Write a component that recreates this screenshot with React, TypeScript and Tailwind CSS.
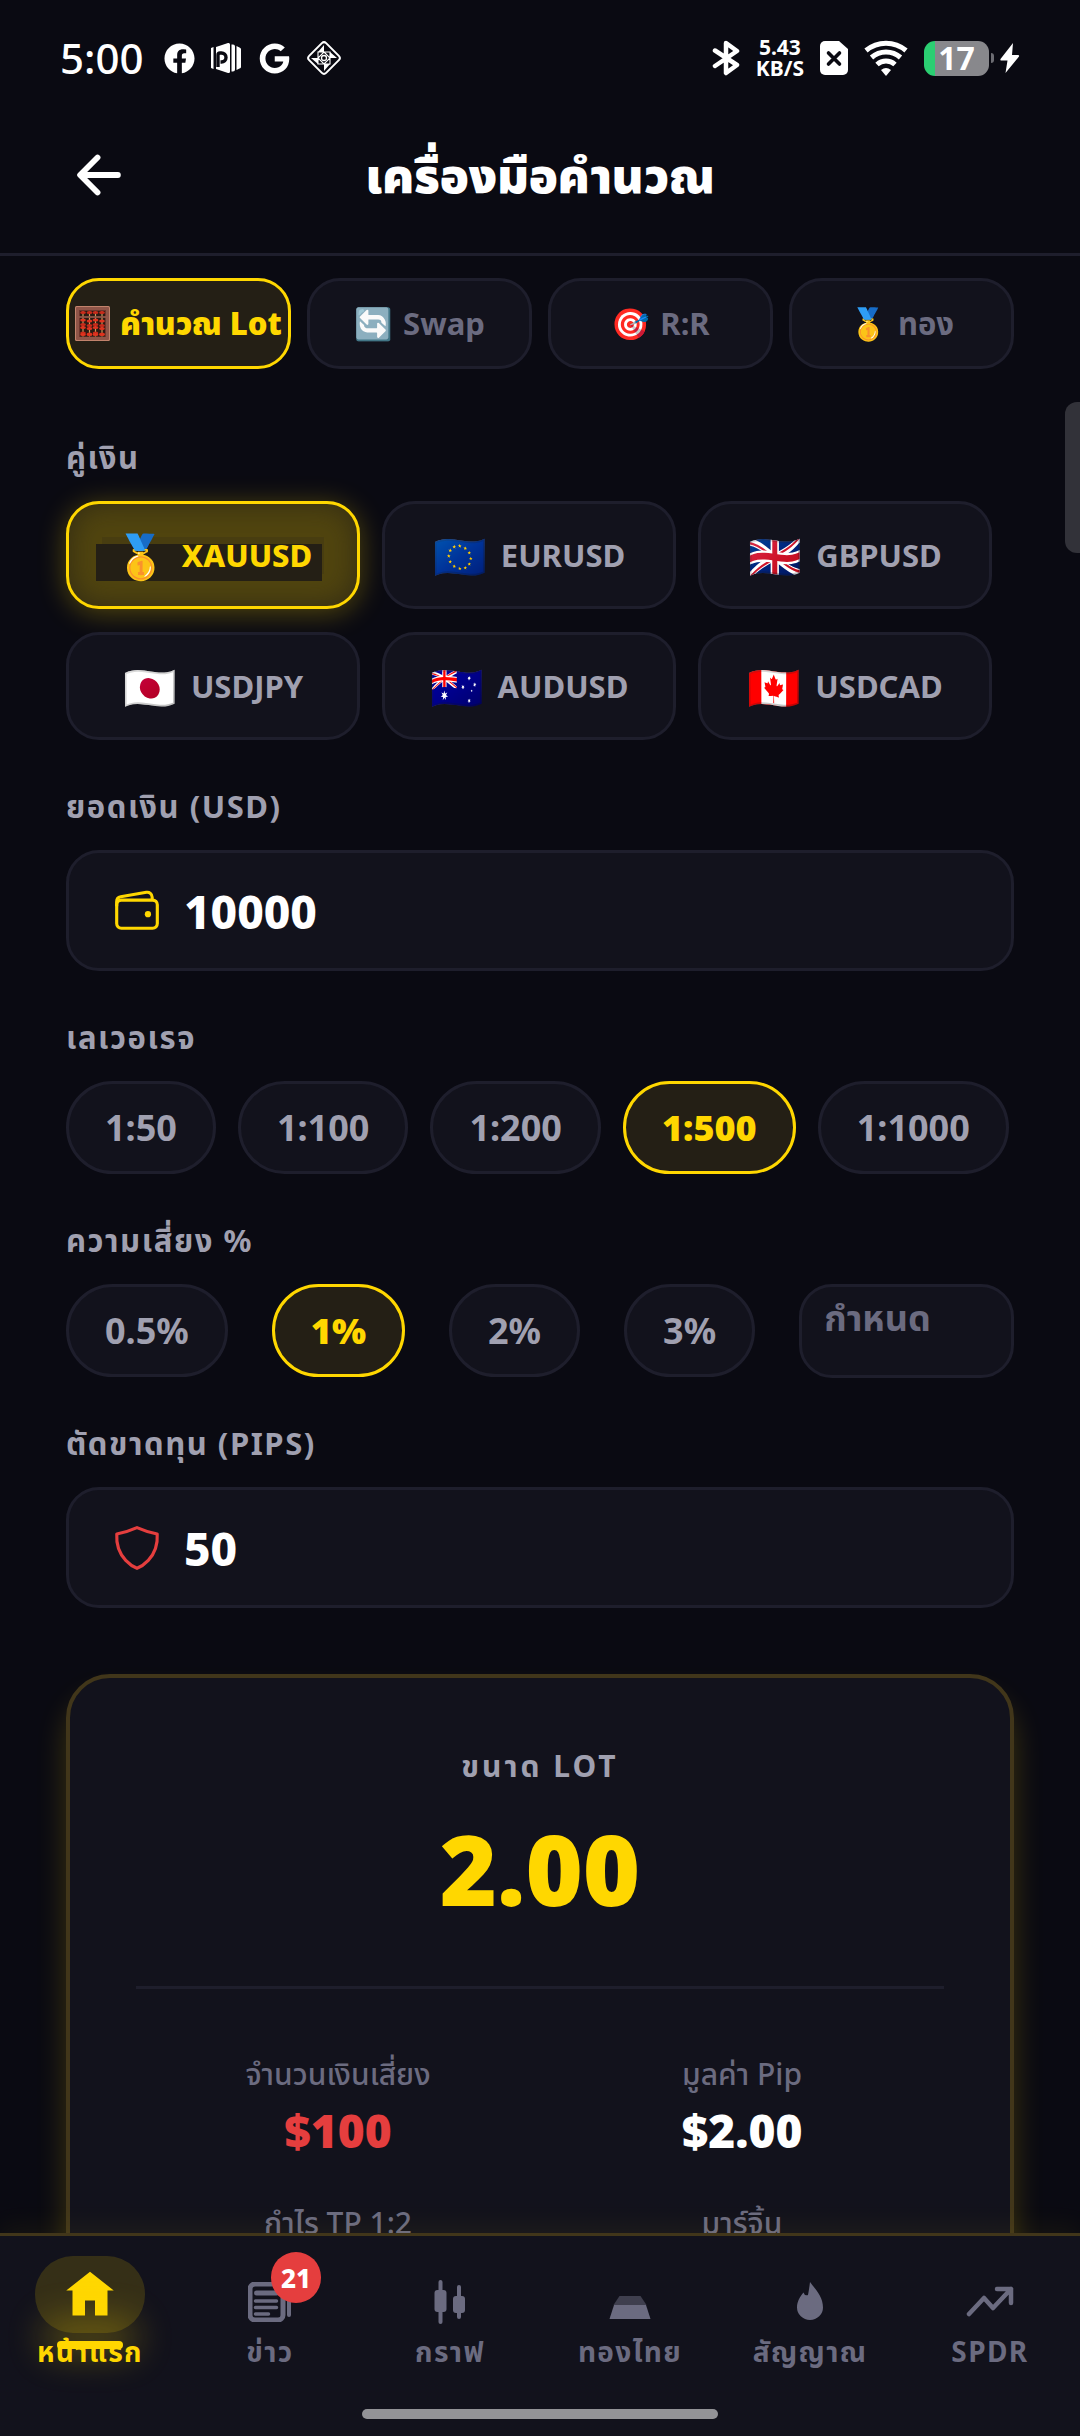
import { useState } from "react";
import type { ReactNode } from "react";
import { IoArrowBack, IoShieldOutline, IoWalletOutline } from "react-icons/io5";
import { FaFacebook } from "react-icons/fa";
import { FaGoogle } from "react-icons/fa6";

const idle = "border-[#1e1e2c] bg-[#12121c]";
const active = "border-[#ffd700] bg-[#241f15]";

function Abacus() {
  const rods = [8, 14.5, 20.5, 27];
  const beads = [6.5, 14, 18.500, 21.500, 27, 30];
  return (
    <svg viewBox="0 0 35 35" className="size-[35px]">
      <rect width="35" height="35" rx="1.500" fill="#c2836c" />
      <rect x="1" y="1" width="33" height="33" rx="1" fill="#8f5548" />
      <rect x="4" y="4" width="27" height="27" fill="#6d382f" />
      <rect x="5" y="5" width="25" height="25.500" fill="#2a1a14" />
      {rods.map((x, i) => (
        <g key={x}>
          <path d={`M${x} 5v25.500`} stroke="#c99a5b" strokeWidth="1.200" />
          {beads.map((y, j) => (
            <ellipse key={y} cx={x} cy={y + (j > 0 && j < 5 ? (i % 2) * 1 : 0) - (j === 5 ? 1.5 : 0)} rx="2.900" ry="1.500" fill={j % 2 ? "#e0331f" : "#c92a1a"} />
          ))}
        </g>
      ))}
      <path d="M4 11h27" stroke="#8f5548" strokeWidth="1.800" />
    </svg>
  );
}

const tabs: { icon: ReactNode; label: string }[] = [
  { icon: <Abacus />, label: "คำนวณ Lot" },
  { icon: "🔄", label: "Swap" },
  { icon: "🎯", label: "R:R" },
  { icon: "🥇", label: "ทอง" },
];

const pairs = [
  { flag: "🥇", code: "XAUUSD" },
  { flag: "🇪🇺", code: "EURUSD" },
  { flag: "🇬🇧", code: "GBPUSD" },
  { flag: "🇯🇵", code: "USDJPY" },
  { flag: "🇦🇺", code: "AUDUSD" },
  { flag: "🇨🇦", code: "USDCAD" },
];

function StatusBar() {
  return (
    <div className="flex h-[116px] shrink-0 items-center justify-between px-[60px] text-white">
      <div className="flex items-center gap-4">
        <span className="mr-1 text-[42px] leading-none font-medium">5:00</span>
        <FaFacebook className="size-[31px]" />
        <svg viewBox="0 0 32 32" className="size-8" fill="currentColor">
          <path d="M0 6l2.500-1v22L0 26zM5 5L17 1q2-.5 2 1.500v27q0 2-2 1.500L5 27zM20.500 2.500H22q2 0 2 2v23q0 2-2 2h-1.500zM25.500 4l3 1.500q1.500.5 1.500 1.500v18q0 1-1.500 1.500l-3 1.500z" />
          <path d="M7 25V13q0-2 2-2h1.500a4.500 4.500 0 010 9H9.500" fill="none" stroke="#0a0a12" strokeWidth="3.400" />
        </svg>
        <FaGoogle className="size-[31px]" />
        <svg viewBox="0 0 36 36" className="size-9" fill="none" stroke="currentColor" strokeWidth="2">
          <rect x="6" y="6" width="24" height="24" rx="3" transform="rotate(45 18 18)" />
          <path d="M12 12h12v12H12zM18 12l6 6-6 6-6-6z" strokeWidth="1.100" />
          <path d="M18 5v7l-6 0zM31 18h-7v-6zM18 31v-7h6zM5 18h7v6z" fill="currentColor" stroke="none" />
          <circle cx="18" cy="18" r="2.500" strokeWidth="1.300" />
        </svg>
      </div>
      <div className="flex items-center gap-4">
        <svg viewBox="0 0 28 36" className="h-9 w-7" fill="none" stroke="currentColor" strokeWidth="4.500" strokeLinecap="round" strokeLinejoin="round">
          <path d="M3 10.500L25 25l-11 8V3l11 8L3 26" />
        </svg>
        <div className="text-center text-[21px] leading-[21px] font-bold">
          <div>5.43</div>
          <div>KB/S</div>
        </div>
        <svg viewBox="0 0 28 34" className="h-[34px] w-7">
          <path d="M5 0h14l9 8v21a5 5 0 01-5 5H5a5 5 0 01-5-5V5a5 5 0 015-5z" fill="currentColor" />
          <path d="M8.500 12l11 11M19.500 12l-11 11" stroke="#0a0a12" strokeWidth="3.600" strokeLinecap="round" />
        </svg>
        <svg viewBox="0 0 44 36" className="h-9 w-11" fill="none" stroke="currentColor" strokeWidth="5">
          <path d="M2 10.500a31 31 0 0140 0M7.500 17.500a22 22 0 0129 0M13 24.500a13.500 13.500 0 0118 0" />
          <path d="M17 30q5-4 10 0l-5 6z" fill="currentColor" stroke="none" />
        </svg>
        <div className="flex items-center gap-[2px]">
          <div className="flex h-[35px] w-[65px] items-center justify-center rounded-[11px] bg-linear-to-r from-[#2bcf72] from-[17%] to-[#88888c] to-[17%] text-[32px] leading-none font-bold">17</div>
          <div className="h-[10px] w-[3px] rounded-r bg-[#6c6c72]" />
          <svg viewBox="0 0 20 30" className="ml-1 h-[30px] w-5" fill="currentColor">
            <path d="M13 0L0.500 16q-.5 1.500 1 1.500H7.500L5.500 30 19 13.500q.5-1.500-1-1.500h-6z" />
          </svg>
        </div>
      </div>
    </div>
  );
}

function Label({ children, htmlFor }: { children: ReactNode; htmlFor?: string }) {
  const style = "mb-[22px] block text-[31px] leading-[44px] font-bold tracking-wider text-[#a0a0b0]";
  return htmlFor ? <label htmlFor={htmlFor} className={style}>{children}</label> : <h2 className={style}>{children}</h2>;
}

function Chip({ children, on, onClick }: { children: ReactNode; on: boolean; onClick: () => void }) {
  return (
    <button
      type="button"
      onClick={onClick}
      className={`h-[93px] rounded-full border-[3px] px-9 text-[36px] leading-none ${on ? `${active} font-black text-[#ffd700]` : `${idle} font-bold text-[#a0a0b0]`}`}
    >
      {children}
    </button>
  );
}

function Field({ id, icon, value, onChange }: { id: string; icon: ReactNode; value: string; onChange: (v: string) => void }) {
  return (
    <div className={`flex h-[121px] items-center gap-[22px] rounded-[33px] border-[3px] px-[43px] ${idle}`}>
      {icon}
      <input id={id} inputMode="numeric" value={value} onChange={(e) => onChange(e.target.value)} className="min-w-0 flex-1 bg-transparent text-[46px] leading-[60px] font-extrabold text-white outline-none" />
    </div>
  );
}

function Stat({ label, value, tone }: { label: string; value: string; tone: string }) {
  return (
    <div className="text-center">
      <div className="text-[30px] leading-[40px] font-medium text-[#6b6b80]">{label}</div>
      <div className={`mt-2 text-[46px] leading-[56px] font-black ${tone}`}>{value}</div>
    </div>
  );
}

const navIcons = {
  news: (
    <svg viewBox="0 0 44 40" className="h-10 w-11" fill="none" stroke="currentColor" strokeLinecap="round">
      <rect x="2" y="2" width="33" height="36" rx="5" strokeWidth="5" />
      <path d="M8.500 11h20" strokeWidth="5" />
      <path d="M7.500 19h21M7.500 25.500h21M7.500 32h13" strokeWidth="3.500" />
      <path d="M41 12v21" strokeWidth="4" />
    </svg>
  ),
  chart: (
    <svg viewBox="0 0 32 44" className="h-11 w-8" fill="currentColor">
      <rect x="4.500" width="4" height="44" rx="2" />
      <rect x=".5" y="10" width="12" height="22" rx="3" />
      <rect x="23" y="5" width="4" height="34" rx="2" />
      <rect x="19" y="16" width="12" height="17" rx="3" />
    </svg>
  ),
  gold: (
    <svg viewBox="0 0 42 40" className="h-10 w-[42px]" fill="currentColor">
      <path d="M10.500 14h21l6 9h-33z" opacity=".5" />
      <path d="M5 23h32l4.500 14H.5z" />
    </svg>
  ),
  signal: (
    <svg viewBox="0 0 26 42" className="h-[42px] w-[26px]" fill="currentColor">
      <path d="M13 1c5 7 13 14 13 25.500a13 12.500 0 01-26 0C0 20.500 3 15.500 6.500 11.500q1 3.500 4.500 2.500Q12 9 13 1z" />
    </svg>
  ),
  spdr: (
    <svg viewBox="0 0 48 34" className="h-[34px] w-12" fill="none" stroke="currentColor" strokeWidth="4.500" strokeLinecap="round" strokeLinejoin="round">
      <path d="M3 29l15-16 9 10L45 4M31 4h14v14" />
    </svg>
  ),
};

const navItems = [
  { label: "ข่าว", icon: navIcons.news, badge: "21" },
  { label: "กราฟ", icon: navIcons.chart },
  { label: "ทองไทย", icon: navIcons.gold },
  { label: "สัญญาณ", icon: navIcons.signal },
  { label: "SPDR", icon: navIcons.spdr },
];

function BottomNav() {
  return (
    <nav className="relative z-10 h-[203px] shrink-0 border-t-[3px] border-[#41361a] bg-[#12121c] shadow-[0_-8px_24px_rgba(255,215,0,0.05)]">
      <div className="grid grid-cols-6 pt-5 text-[28px] leading-9 font-bold tracking-wider">
        <a href="#home" className="flex flex-col items-center text-[#ffd700]">
          <span className="relative flex h-[77px] w-[110px] items-center justify-center rounded-[38px] bg-[#ffd700]/15">
            <svg viewBox="0 0 24 24" className="size-[60px]" fill="currentColor">
              <path d="M10 20.200v-6h4v6h5v-10h2.500L12 2.700 2.500 10.200H5v10z" />
            </svg>
            <span className="absolute -bottom-4 h-2 w-[66px] rounded-full bg-[#ffd700] shadow-[0_-8px_36px_14px_rgba(255,215,0,0.28)]" />
          </span>
          <span>หน้าแรก</span>
        </a>
        {navItems.map((n) => (
          <a key={n.label} href={`#${n.label}`} className="flex flex-col items-center text-[#6b6b80]">
            <span className="relative flex h-[77px] items-center justify-center pt-[15px]">
              {n.icon}
              {n.badge && (
                <span className="absolute -top-1 -right-[29px] flex h-[51px] w-[50px] items-center justify-center rounded-full bg-[#e53e3e] text-[26px] font-extrabold tracking-normal text-white">{n.badge}</span>
              )}
            </span>
            <span>{n.label}</span>
          </a>
        ))}
      </div>
      <div className="absolute inset-x-0 bottom-[17px] mx-auto h-[10px] w-[33%] rounded-full bg-[#939397]" />
    </nav>
  );
}

export default function App() {
  const [tab, setTab] = useState(0);
  const [pair, setPair] = useState("XAUUSD");
  const [balance, setBalance] = useState("10000");
  const [leverage, setLeverage] = useState("1:500");
  const [risk, setRisk] = useState("1%");
  const [custom, setCustom] = useState("");
  const [stop, setStop] = useState("50");

  return (
    <div className="relative flex h-screen flex-col overflow-hidden bg-[#0a0a12] font-['Noto_Sans','Noto_Sans_Thai',sans-serif]">
      <StatusBar />
      <header className="grid h-[140px] shrink-0 grid-cols-3 items-center border-b-[3px] border-[#1e1e2c] px-[66px] pb-5 text-white">
        <button type="button" aria-label="ย้อนกลับ" className="justify-self-start">
          <IoArrowBack className="size-[66px] p-[2px]" />
        </button>
        <h1 className="justify-self-center text-[48px] leading-[60px] font-black whitespace-nowrap">เครื่องมือคำนวณ</h1>
      </header>

      <main className="min-h-0 flex-1 overflow-y-auto px-[66px] pt-[22px] [scrollbar-width:none]">
        <div className="grid grid-cols-4 gap-4">
          {tabs.map((t, i) => (
            <button
              key={t.label}
              type="button"
              onClick={() => setTab(i)}
              className={`flex h-[91px] items-center justify-center gap-[10px] rounded-[33px] border-[3px] text-[31px] leading-none whitespace-nowrap ${i === tab ? `${active} font-black text-[#ffd700]` : `${idle} font-bold text-[#6b6b80]`}`}
            >
              <span>{t.icon}</span>
              <span>{t.label}</span>
            </button>
          ))}
        </div>

        <section className="mt-[66px]">
          <Label>คู่เงิน</Label>
          <div className="mr-[22px] grid grid-cols-3 gap-x-[22px] gap-y-[23px]">
            {pairs.map((p) => {
              const on = p.code === pair;
              return (
                <button
                  key={p.code}
                  type="button"
                  onClick={() => setPair(p.code)}
                  className={`relative flex h-[108px] items-center justify-center gap-[14px] rounded-[33px] border-[3px] text-[31px] leading-none ${on ? "border-[#ffd700] bg-[#51450f] font-extrabold text-[#ffd700] shadow-[0_4px_28px_rgba(255,215,0,0.3),inset_0_0_30px_rgba(36,31,21,0.7)]" : `${idle} font-bold text-[#a0a0b0]`}`}
                >
                  {on && (
                    <>
                      <span className="absolute top-[33px] right-[33px] bottom-8 left-[33px] bg-[#483d10]" />
                      <span className="absolute top-10 right-[35px] bottom-[25px] left-[27px] bg-[#241f15]" />
                    </>
                  )}
                  <span className="relative text-[43px]">{p.flag}</span>
                  <span className="relative">{p.code}</span>
                </button>
              );
            })}
          </div>
        </section>

        <section className="mt-11">
          <Label htmlFor="balance">ยอดเงิน (USD)</Label>
          <Field id="balance" value={balance} onChange={setBalance} icon={<IoWalletOutline className="size-[50px] text-[#ffd700]" />} />
        </section>

        <section className="mt-11">
          <Label>เลเวอเรจ</Label>
          <div className="flex gap-[22px]">
            {["1:50", "1:100", "1:200", "1:500", "1:1000"].map((v) => (
              <Chip key={v} on={v === leverage} onClick={() => setLeverage(v)}>{v}</Chip>
            ))}
          </div>
        </section>

        <section className="mt-11">
          <Label htmlFor="risk">ความเสี่ยง %</Label>
          <div className="flex gap-11">
            {["0.5%", "1%", "2%", "3%"].map((v) => (
              <Chip key={v} on={v === risk} onClick={() => setRisk(v)}>{v}</Chip>
            ))}
            <input
              id="risk"
              value={custom}
              onChange={(e) => setCustom(e.target.value)}
              placeholder="กำหนด"
              className={`h-[94px] min-w-0 flex-1 rounded-[33px] border-[3px] px-[22px] pb-7 text-[36px] font-bold text-white outline-none placeholder:text-[#6b6b80] ${idle}`}
            />
          </div>
        </section>

        <section className="mt-[43px]">
          <Label htmlFor="stop">ตัดขาดทุน (PIPS)</Label>
          <Field id="stop" value={stop} onChange={setStop} icon={<IoShieldOutline className="size-[50px] text-[#e53e3e]" />} />
        </section>

        <section className="mt-[66px] rounded-[44px] border-4 border-[#41361a] bg-[#12121c] p-[66px] shadow-[0_22px_30px_rgba(255,215,0,0.2)]">
          <h2 className="text-center text-[30px] leading-[44px] font-bold tracking-widest text-[#a0a0b0]">ขนาด LOT</h2>
          <div className="mt-5 text-center text-[98px] leading-[120px] font-black text-[#ffd700]">2.00</div>
          <hr className="mt-[58px] border-t-[3px] border-[#1e1e2c]" />
          <div className="mt-[65px] grid grid-cols-2 gap-y-[45px]">
            <Stat label="จำนวนเงินเสี่ยง" value="$100" tone="text-[#e53e3e]" />
            <Stat label="มูลค่า Pip" value="$2.00" tone="text-white" />
            <Stat label="กำไร TP 1:2" value="$200" tone="text-[#2bcf72]" />
            <Stat label="มาร์จิ้น" value="$800" tone="text-white" />
          </div>
        </section>
      </main>

      <div className="absolute top-[402px] right-0 h-[151px] w-[15px] rounded-l-[12px] bg-[#323239]" />
      <BottomNav />
    </div>
  );
}
